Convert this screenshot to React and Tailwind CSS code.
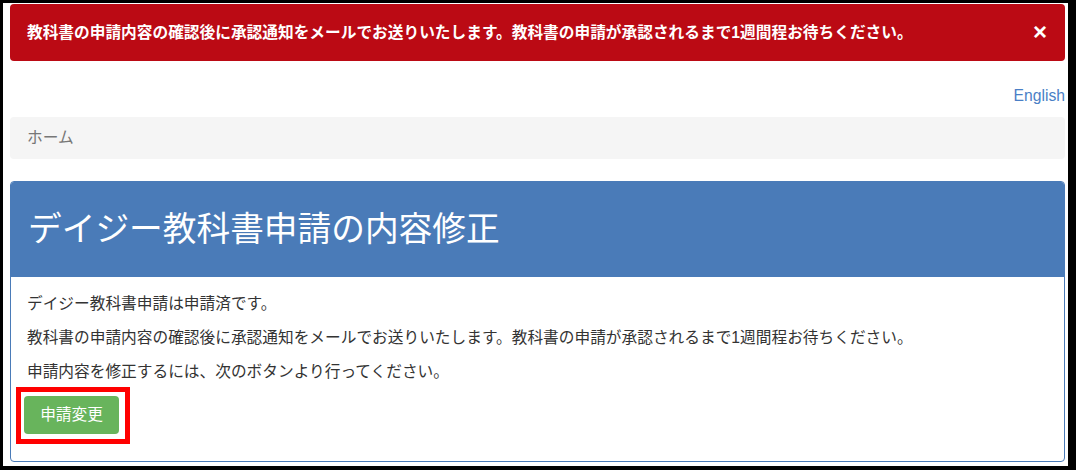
export default function App() {
  const font = "font-['Liberation_Sans','Noto_Sans_CJK_JP',sans-serif]";
  return (
    <div className={`w-[1076px] h-[470px] bg-black pt-[3px] pl-[3px] pr-[8px] pb-[4px] ${font}`}>
      <div className="h-full bg-white pl-[7px] pr-[3px] pt-[1px] overflow-hidden">
        {/* Alert */}
        <div className="h-[57px] rounded-[4px] bg-[#bb0a14] flex items-center justify-between pl-[17px] pr-[18px] text-white font-bold text-[15.7px]">
          <span>
            教科書の申請内容の確認後に承認通知をメールでお送りいたします。教科書の申請が承認されるまで1週間程お待ちください。
          </span>
          <span className="text-[24px] leading-none font-bold mt-[-2px]">×</span>
        </div>

        {/* Language */}
        <div className="mt-[24px] flex justify-end leading-[22px]">
          <a href="#" className="text-[15.7px] text-[#4a7fc6]">
            English
          </a>
        </div>

        {/* Breadcrumb */}
        <div className="mt-[10px] h-[42px] rounded-[4px] bg-[#f5f5f5] px-[17px] flex items-center text-[15.7px] text-[#777]">
          ホーム
        </div>

        {/* Panel */}
        <div className="mt-[22px] border border-[#4a7bb8] rounded-[4px] overflow-hidden">
          <div className="h-[95px] bg-[#4a7bb8] pl-[17px] flex items-center text-white text-[33.7px] leading-none">
            デイジー教科書申請の内容修正
          </div>
          <div className="px-[16px] pt-[16px] pb-[27px] text-[15.7px] text-[#333] leading-[22px]">
            <p className="mb-[12px]">デイジー教科書申請は申請済です。</p>
            <p className="mb-[12px]">
              教科書の申請内容の確認後に承認通知をメールでお送りいたします。教科書の申請が承認されるまで1週間程お待ちください。
            </p>
            <p>申請内容を修正するには、次のボタンより行ってください。</p>
            <div className="relative mt-[13px] ml-[-3px] w-[95px]">
              <button className="w-[95px] h-[38px] rounded-[4px] bg-[#68b45c] text-white text-[15.7px] flex items-center justify-center">
                申請変更
              </button>
              <div className="absolute -left-[8px] -top-[9px] -right-[11px] -bottom-[10px] border-[5px] border-[#ff0000] pointer-events-none" />
            </div>
          </div>
        </div>
      </div>
    </div>
  );
}
